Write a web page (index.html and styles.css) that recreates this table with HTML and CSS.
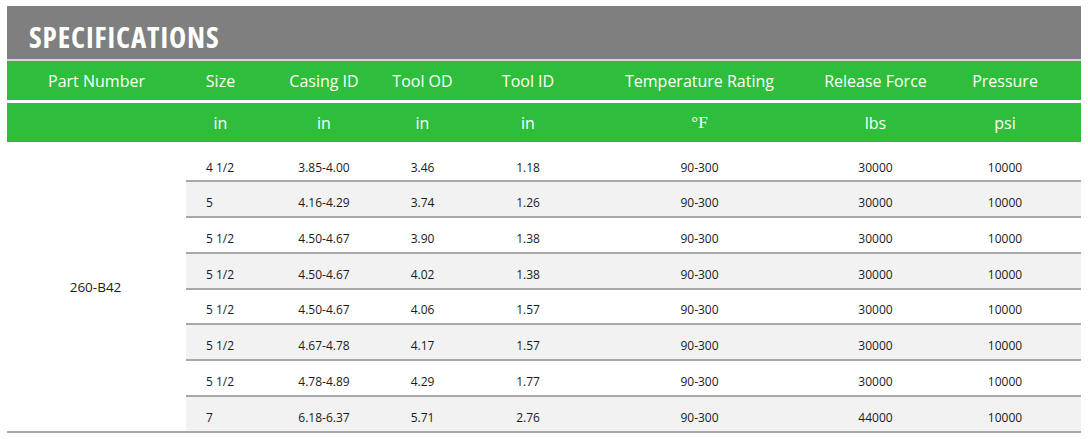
FILE: index.html
```html
<!DOCTYPE html>
<html>
<head>
<meta charset="utf-8">
<link rel="stylesheet" href="styles.css">
</head>
<body>
<div class="spec">
  <div class="title"><span class="title-text">SPECIFICATIONS</span></div>
  <div class="cols head">
    <div class="c c1">Part Number</div>
    <div class="c">Size</div>
    <div class="c">Casing ID</div>
    <div class="c">Tool OD</div>
    <div class="c">Tool ID</div>
    <div class="c">Temperature Rating</div>
    <div class="c">Release Force</div>
    <div class="c clast">Pressure</div>
  </div>
  <div class="cols head units">
    <div class="c c1"></div>
    <div class="c">in</div>
    <div class="c">in</div>
    <div class="c">in</div>
    <div class="c">in</div>
    <div class="c deg">°F</div>
    <div class="c">lbs</div>
    <div class="c clast">psi</div>
  </div>
  <div class="body">
    <div class="part">260-B42</div>
    <div class="rows">
      <div class="row first"><div class="d size">4 1/2</div><div class="d">3.85-4.00</div><div class="d">3.46</div><div class="d">1.18</div><div class="d">90-300</div><div class="d">30000</div><div class="d dlast">10000</div></div>
      <div class="row alt"><div class="d size">5</div><div class="d">4.16-4.29</div><div class="d">3.74</div><div class="d">1.26</div><div class="d">90-300</div><div class="d">30000</div><div class="d dlast">10000</div></div>
      <div class="row"><div class="d size">5 1/2</div><div class="d">4.50-4.67</div><div class="d">3.90</div><div class="d">1.38</div><div class="d">90-300</div><div class="d">30000</div><div class="d dlast">10000</div></div>
      <div class="row alt"><div class="d size">5 1/2</div><div class="d">4.50-4.67</div><div class="d">4.02</div><div class="d">1.38</div><div class="d">90-300</div><div class="d">30000</div><div class="d dlast">10000</div></div>
      <div class="row"><div class="d size">5 1/2</div><div class="d">4.50-4.67</div><div class="d">4.06</div><div class="d">1.57</div><div class="d">90-300</div><div class="d">30000</div><div class="d dlast">10000</div></div>
      <div class="row alt"><div class="d size">5 1/2</div><div class="d">4.67-4.78</div><div class="d">4.17</div><div class="d">1.57</div><div class="d">90-300</div><div class="d">30000</div><div class="d dlast">10000</div></div>
      <div class="row"><div class="d size">5 1/2</div><div class="d">4.78-4.89</div><div class="d">4.29</div><div class="d">1.77</div><div class="d">90-300</div><div class="d">30000</div><div class="d dlast">10000</div></div>
      <div class="row alt"><div class="d size">7</div><div class="d">6.18-6.37</div><div class="d">5.71</div><div class="d">2.76</div><div class="d">90-300</div><div class="d">44000</div><div class="d dlast">10000</div></div>
    </div>
  </div>
</div>
</body>
</html>
```

FILE: styles.css
```css
html, body {
  margin: 0;
  padding: 0;
  background: #ffffff;
}
body {
  padding: 6px 7px;
  font-family: "Open Sans", "Liberation Sans", sans-serif;
}
.spec {
  width: 1074px;
}
.title {
  height: 53px;
  background: #7f7f7f;
  border-bottom: 2px solid #d6d6d6;
  box-sizing: content-box;
  display: flex;
  align-items: center;
  padding-left: 22px;
}
.title-text {
  display: inline-block;
  color: #ffffff;
  font-family: "Open Sans", sans-serif;
  font-weight: 700;
  font-size: 29px;
  font-stretch: 75%;
  letter-spacing: 0.9px;
  line-height: 1;
  margin-top: 7px;
}
.cols {
  display: grid;
  grid-template-columns: 179px 69px 138px 59px 152px 191px 161px 125px;
}
.head {
  height: 39px;
  background: #2ebe3b;
  color: #ffffff;
  font-size: 16px;
}
.units {
  margin-top: 3px;
}
.c {
  display: flex;
  align-items: center;
  justify-content: center;
  white-space: nowrap;
}
.clast {
  padding-right: 27px;
}
.deg {
  font-family: "Liberation Serif", serif;
  font-size: 17px;
}
.body {
  display: grid;
  grid-template-columns: 179px 895px;
  border-bottom: 2px solid #a8a8a8;
}
.part {
  display: flex;
  align-items: center;
  justify-content: center;
  padding-top: 2px;
  padding-right: 2px;
  font-size: 13.5px;
  color: #1a1a1a;
}
.rows {
  display: flex;
  flex-direction: column;
}
.row {
  display: grid;
  grid-template-columns: 69px 138px 59px 152px 191px 161px 125px;
  height: 33.85px;
  border-top: 2px solid #a8a8a8;
  font-size: 12px;
  color: #1a1a1a;
  background: #ffffff;
}
.row.first {
  border-top: 0;
  height: 38px;
  padding-top: 4px;
  box-sizing: border-box;
}
.row.alt {
  background: #f2f2f2;
}
.d {
  display: flex;
  align-items: center;
  justify-content: center;
  white-space: nowrap;
  padding-top: 7px;
  box-sizing: border-box;
}
.row.first .d {
  padding-top: 8px;
}
.d.size {
  justify-content: flex-start;
  padding-left: 20px;
}
.dlast {
  padding-right: 27px;
}
```
